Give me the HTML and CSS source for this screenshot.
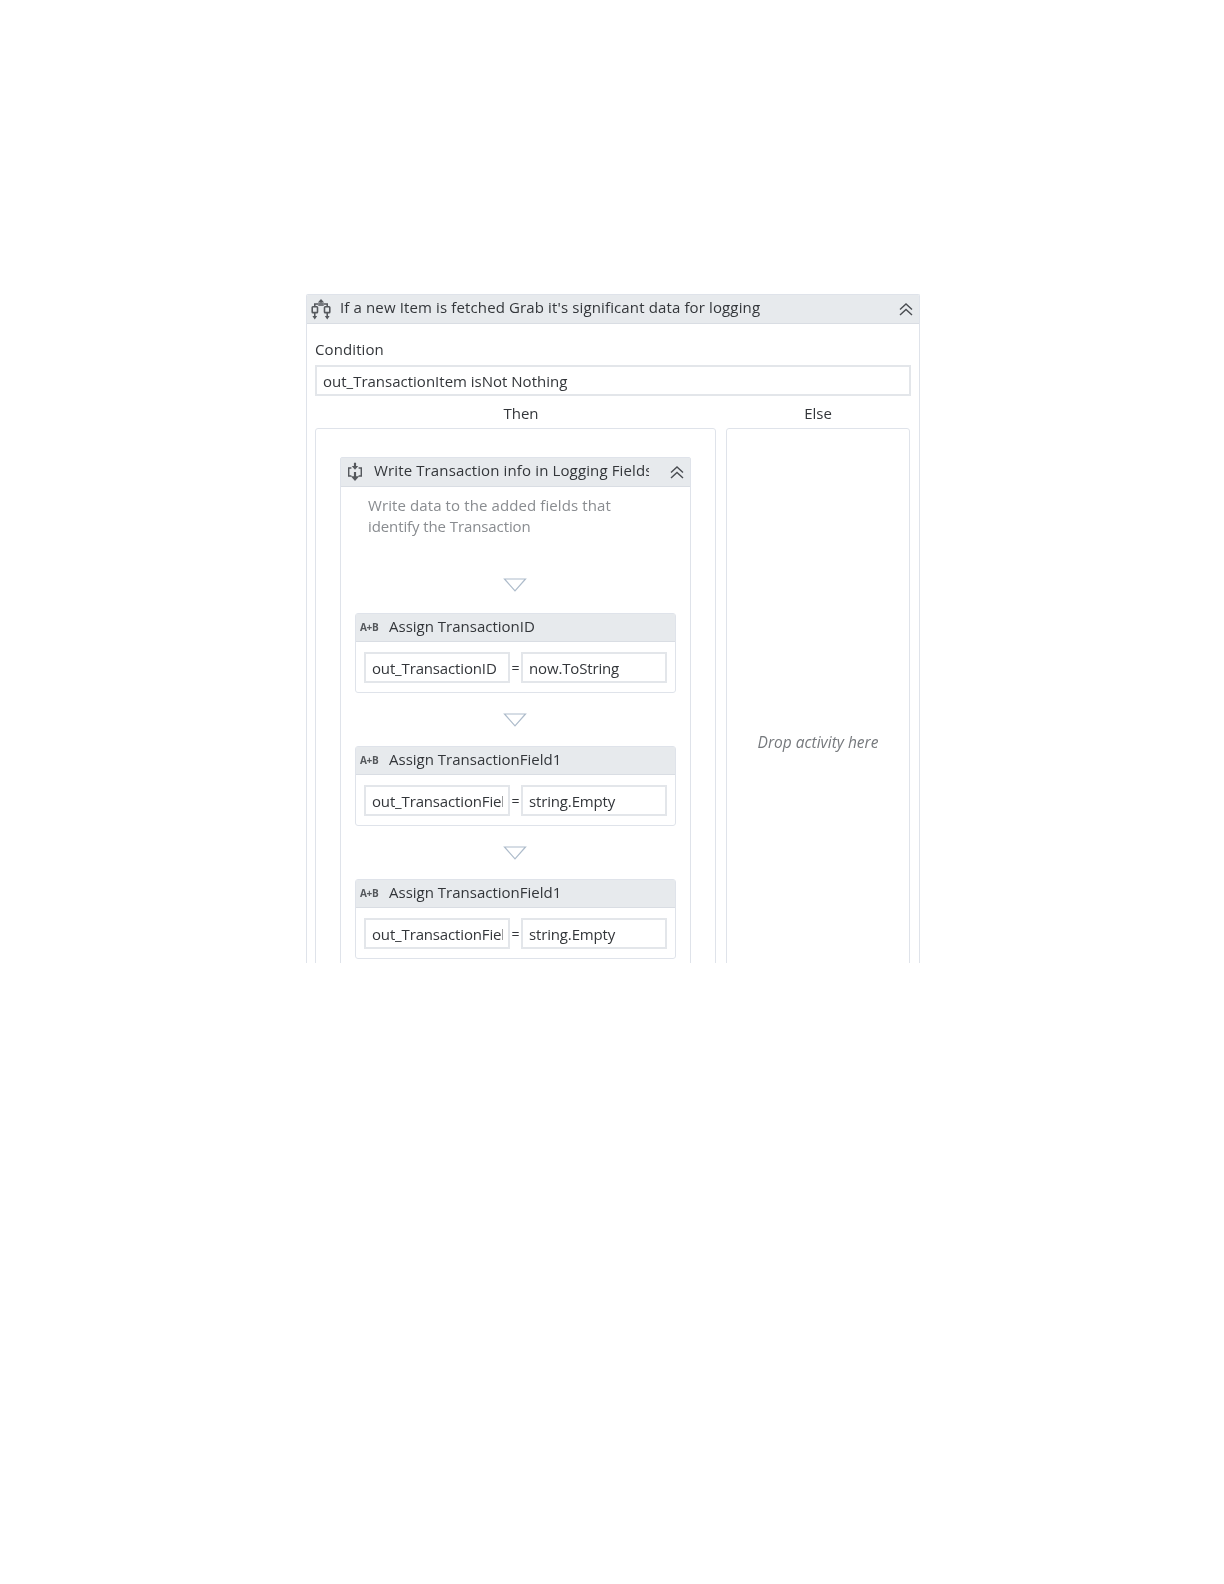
FILE: index.html
```html
<!DOCTYPE html>
<html lang="en">
<head>
<meta charset="utf-8">
<title>If activity</title>
<link rel="stylesheet" href="styles.css">
</head>
<body>
<main class="if-card">
  <header class="head head-main">
    <svg class="icon-flow" viewBox="0 0 24 24" fill="none" stroke="#55585d" stroke-width="1.7">
      <path d="M12 2v3" />
      <path d="M8.800 4 12 .6 15.200 4z" fill="#55585d" stroke="none"/>
      <rect x="9" y="4.200" width="6" height="4" fill="#75787d" stroke="none"/>
      <path d="M9 6H5.200v3M15 6h3.800v3"/>
      <rect x="2.400" y="9" width="5.800" height="6.400" rx=".8"/>
      <rect x="15.800" y="9" width="5.800" height="6.400" rx=".8"/>
      <path d="M5.200 15.500v5M18.800 15.500v5"/>
      <path d="m2.600 19 2.600 4 2.600-4zM16.200 19l2.600 4 2.600-4z" fill="#55585d" stroke="none"/>
    </svg>
    <span class="head-title">If a new Item is fetched Grab it's significant data for logging</span>
    <svg class="chev" viewBox="0 0 14 14" fill="none" stroke="#4a4d52" stroke-width="1.4"><path d="m1 7.500 6-5.500 6 5.500M1 13l6-5.500 6 5.500"/></svg>
  </header>
  <section class="if-body">
    <div class="label">Condition</div>
    <div class="field field-wide">out_TransactionItem isNot Nothing</div>
    <div class="branches">
      <div class="branch branch-then">
        <div class="branch-name branch-name-then">Then</div>
        <div class="panel panel-then">
          <div class="seq">
            <header class="head head-seq">
              <svg class="icon-seq" viewBox="0 0 20 22" fill="none" stroke="#55585d" stroke-width="1.600">
                <path d="M10 .8v5.400" stroke-width="2.400"/>
                <path d="m6.400 4.400 3.600 4.200 3.600-4.200z" fill="#55585d" stroke="none"/>
                <path d="M6 6.600H3v8.800h3M14 6.600h3v8.800h-3"/>
                <path d="M10 11v6" stroke-width="2.400"/>
                <path d="m5.400 15.600 4.600 5.400 4.600-5.400z" fill="#55585d" stroke="none"/>
              </svg>
              <span class="seq-title">Write Transaction info in Logging Fields</span>
              <svg class="chev" viewBox="0 0 14 14" fill="none" stroke="#4a4d52" stroke-width="1.4"><path d="m1 7.500 6-5.500 6 5.500M1 13l6-5.500 6 5.500"/></svg>
            </header>
            <p class="note">Write data to the added fields that<br><span class="note-second">identify the Transaction</span></p>
            <div class="drop drop-first"><svg class="tri" viewBox="0 0 24 14" fill="none" stroke="#aebccb" stroke-width="1.200"><path d="M1.500 1h21L12 12.800z"/></svg></div>
            <article class="assign">
              <header class="head head-assign"><span class="ab">A+B</span><span>Assign TransactionID</span></header>
              <div class="assign-row"><div class="field field-half"><span class="clip">out_TransactionID</span></div><span class="eq">=</span><div class="field field-half"><span class="clip">now.ToString</span></div></div>
            </article>
            <div class="drop"><svg class="tri" viewBox="0 0 24 14" fill="none" stroke="#aebccb" stroke-width="1.200"><path d="M1.500 1h21L12 12.800z"/></svg></div>
            <article class="assign">
              <header class="head head-assign"><span class="ab">A+B</span><span>Assign TransactionField1</span></header>
              <div class="assign-row"><div class="field field-half"><span class="clip">out_TransactionField1</span></div><span class="eq">=</span><div class="field field-half"><span class="clip">string.Empty</span></div></div>
            </article>
            <div class="drop"><svg class="tri" viewBox="0 0 24 14" fill="none" stroke="#aebccb" stroke-width="1.200"><path d="M1.500 1h21L12 12.800z"/></svg></div>
            <article class="assign">
              <header class="head head-assign"><span class="ab">A+B</span><span>Assign TransactionField1</span></header>
              <div class="assign-row"><div class="field field-half"><span class="clip">out_TransactionField2</span></div><span class="eq">=</span><div class="field field-half"><span class="clip">string.Empty</span></div></div>
            </article>
          </div>
        </div>
      </div>
      <div class="branch branch-else">
        <div class="branch-name">Else</div>
        <div class="panel panel-else"><span class="drop-text">Drop activity here</span></div>
      </div>
    </div>
  </section>
</main>
</body>
</html>
```
FILE: styles.css
```css
* { box-sizing: border-box; }
html, body { margin: 0; background: #fff; }
body {
  height: 1584px;
  padding: 294px 0 0 306px;
  font-family: "Open Sans", "Noto Sans", sans-serif;
  font-size: 15px;
  color: #33363a;
  overflow: hidden;
}
.if-card {
  width: 614px;
  height: 669px;
  overflow: hidden;
  border: 1px solid #dfe3ea;
  border-bottom: 0;
  border-radius: 2px 2px 0 0;
  filter: blur(.3px);
}
.head {
  display: flex;
  align-items: center;
  background: #e7eaed;
  border-bottom: 1px solid #d9dde3;
  padding-bottom: 4px;
}
.head-main { height: 29px; padding-left: 3px; padding-right: 6px; }
.icon-flow { width: 22px; height: 23px; flex: none; margin: 4px 8px 0 0; }
.head-title { flex: 1; white-space: nowrap; letter-spacing: .13px; }
.chev { width: 14px; height: 14px; flex: none; margin-top: 4px; }
.if-body { padding: 15px 8px 0 8px; }
.label { height: 26px; line-height: 20px; letter-spacing: .1px; }
.field {
  background: #fff;
  border: 2px solid #e3e6ea;
  height: 31px;
  line-height: 27px;
  padding: 0 5px 0 6px;
  white-space: nowrap;
}
.field-wide { width: 596px; padding-top: 1px; }
.branches { display: flex; gap: 10px; }
.branch-then { width: 401px; }
.branch-else { width: 184px; }
.branch-name { height: 32px; line-height: 34px; text-align: center; }
.branch-name-then { padding-left: 11px; }
.panel {
  height: 600px;
  border: 1px solid #dfe3ea;
  border-radius: 3px;
}
.panel-then { padding: 28px 24px 0; }
.panel-else { padding-top: 302px; text-align: center; }
.drop-text { font-style: italic; color: #76797d; font-size: 15.500px; }
.seq {
  width: 351px;
  border: 1px solid #dfe3ea;
  border-radius: 2px;
  padding-bottom: 30px;
}
.head-seq { height: 29px; padding-left: 5px; padding-right: 6px; }
.icon-seq { width: 18px; height: 20px; flex: none; margin: 4px 10px 0 0; }
.seq-title {
  width: 275px;
  flex: none;
  margin-right: 21px;
  white-space: nowrap;
  overflow: hidden;
  letter-spacing: .13px;
}
.note {
  margin: 8px 0 0 27px;
  line-height: 21px;
  color: #898c90;
  letter-spacing: .1px;
}
.note-second { letter-spacing: -.1px; }
.drop { display: flex; justify-content: center; height: 53px; padding-top: 20px; padding-right: 1px; }
.drop-first { height: 76px; padding-top: 41px; }
.tri { width: 24px; height: 14px; }
.assign {
  width: 321px;
  height: 80px;
  margin-left: 14px;
  border: 1px solid #dfe3ea;
  border-radius: 3px;
}
.head-assign { height: 28px; padding-left: 4px; }
.ab {
  width: 29px;
  font-size: 10px;
  font-weight: 700;
  color: #55585c;
  letter-spacing: -.3px;
  margin-top: 3px;
}
.assign-row { display: flex; align-items: center; padding: 10px 8px 0; }
.field-half { width: 146px; }
.clip { display: block; width: 131px; height: 27px; padding-top: 1px; overflow: hidden; letter-spacing: -.15px; }
.eq { width: 12px; text-align: center; font-size: 14px; }
```
